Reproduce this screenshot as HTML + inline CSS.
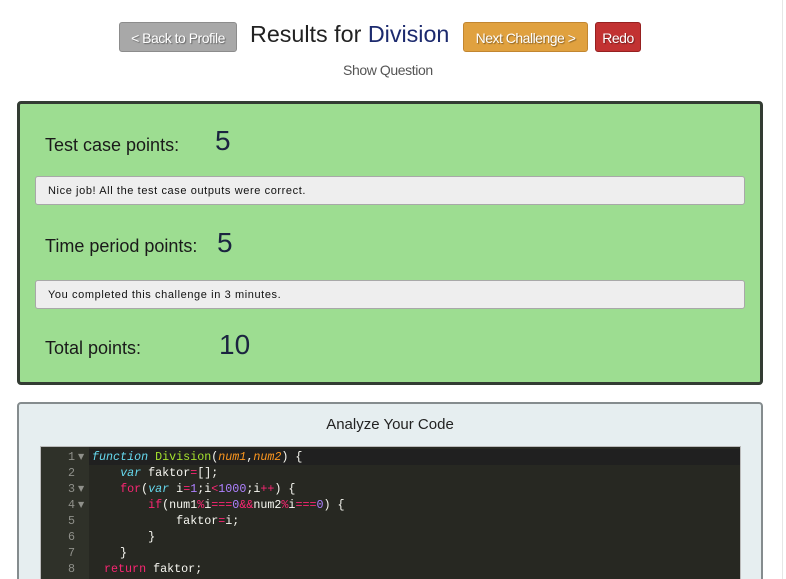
<!DOCTYPE html>
<html style="overflow:hidden"><head><style>
html,body{margin:0;width:786px;height:579px;overflow:hidden}
body{background:#fff;font-family:"Liberation Sans",sans-serif;position:relative}
.abs{position:absolute}
.btn{position:absolute;top:22px;height:30px;box-sizing:border-box;border-radius:3px;color:#fff;font-size:14px;letter-spacing:-0.5px;line-height:30px;text-align:center;text-shadow:1px 1px 1px rgba(0,0,0,.4);white-space:nowrap;overflow:hidden}
.green{left:17px;top:101px;width:746px;height:284px;box-sizing:border-box;background:#9ddd91;border:3px solid #333c33;border-radius:4px}
.lbl{position:absolute;font-size:18px;color:#1a1a1a}
.num{position:absolute;font-size:28px;color:#1b2440}
.msg{position:absolute;left:15px;width:710px;height:29px;box-sizing:border-box;background:#eeeeee;border:1px solid #a8a8a8;border-radius:3px;font-size:11px;letter-spacing:.6px;line-height:29px;padding-left:12px;color:#111}
.an{left:17px;top:402px;width:746px;height:190px;box-sizing:border-box;background:#e6eef0;border:2px solid #858c8e;border-radius:4px}
.ed{position:absolute;left:21px;top:42px;width:699px;height:150px;background:#272822;border:1px solid #bbb;font-family:"Liberation Mono",monospace;font-size:11.7px}
.gut{position:absolute;left:0;top:0;width:48px;height:150px;background:#2f3129}
.ln{position:absolute;height:16px;line-height:16px;color:#8f908a;width:34px;text-align:right}
.ar{position:absolute;left:37px;height:16px;line-height:16px;color:#8f908a;font-size:8px;font-family:"DejaVu Sans",sans-serif}
.cl{position:absolute;left:51px;height:16px;line-height:16px;color:#f8f8f2;white-space:pre}
.k{color:#f92672}.s{color:#66d9ef;font-style:italic}.f{color:#a6e22e}.p{color:#fd971f;font-style:italic}.n{color:#ae81ff}
</style></head><body>
<div class="abs" style="left:782px;top:0;width:1px;height:579px;background:#e6e6e6"></div>
<div class="btn" style="left:119px;width:118px;background:#a8a8a8;border:1px solid #8c8c8c">&lt; Back to Profile</div>
<div class="abs" style="left:250px;top:21px;font-size:23.3px;color:#222">Results for <span style="color:#1c2a6e">Division</span></div>
<div class="btn" style="left:463px;width:125px;background:#e0a13f;border:1px solid #c28630">Next Challenge &gt;</div>
<div class="btn" style="left:595px;width:46px;background:#c23232;border:1px solid #962020">Redo</div>
<div class="abs" style="left:343px;top:62px;font-size:14px;letter-spacing:-0.4px;color:#555">Show Question</div>
<div class="abs green">
<div class="lbl" style="left:25px;top:31px">Test case points:</div>
<div class="num" style="left:195px;top:21px">5</div>
<div class="msg" style="top:72px">Nice job! All the test case outputs were correct.</div>
<div class="lbl" style="left:25px;top:132px">Time period points:</div>
<div class="num" style="left:197px;top:123px">5</div>
<div class="msg" style="top:176px">You completed this challenge in 3 minutes.</div>
<div class="lbl" style="left:25px;top:234px">Total points:</div>
<div class="num" style="left:199px;top:225px">10</div>
</div>
<div class="abs an">
<div class="abs" style="left:0;width:742px;top:12px;text-align:center;font-size:15px;color:#222">Analyze Your Code</div>
<div class="ed">
<div class="abs" style="left:0;top:2px;width:699px;height:16px;background:#202020"></div>
<div class="gut"></div>
<div class="ln" style="top:2px">1</div><div class="ln" style="top:18px">2</div><div class="ln" style="top:34px">3</div><div class="ln" style="top:50px">4</div><div class="ln" style="top:66px">5</div><div class="ln" style="top:82px">6</div><div class="ln" style="top:98px">7</div><div class="ln" style="top:114px">8</div>
<div class="ar" style="top:2px">▼</div><div class="ar" style="top:34px">▼</div><div class="ar" style="top:50px">▼</div>
<div class="cl" style="top:2px"><span class="s">function</span> <span class="f">Division</span>(<span class="p">num1</span>,<span class="p">num2</span>) {</div>
<div class="cl" style="top:18px">    <span class="s">var</span> faktor<span class="k">=</span>[];</div>
<div class="cl" style="top:34px">    <span class="k">for</span>(<span class="s">var</span> i<span class="k">=</span><span class="n">1</span>;i<span class="k">&lt;</span><span class="n">1000</span>;i<span class="k">++</span>) {</div>
<div class="cl" style="top:50px">        <span class="k">if</span>(num1<span class="k">%</span>i<span class="k">===</span><span class="n">0</span><span class="k">&amp;&amp;</span>num2<span class="k">%</span>i<span class="k">===</span><span class="n">0</span>) {</div>
<div class="cl" style="top:66px">            faktor<span class="k">=</span>i;</div>
<div class="cl" style="top:82px">        }</div>
<div class="cl" style="top:98px">    }</div>
<div class="cl" style="top:114px;left:63px"><span class="k">return</span> faktor;</div>
</div>
</div>
</body></html>
